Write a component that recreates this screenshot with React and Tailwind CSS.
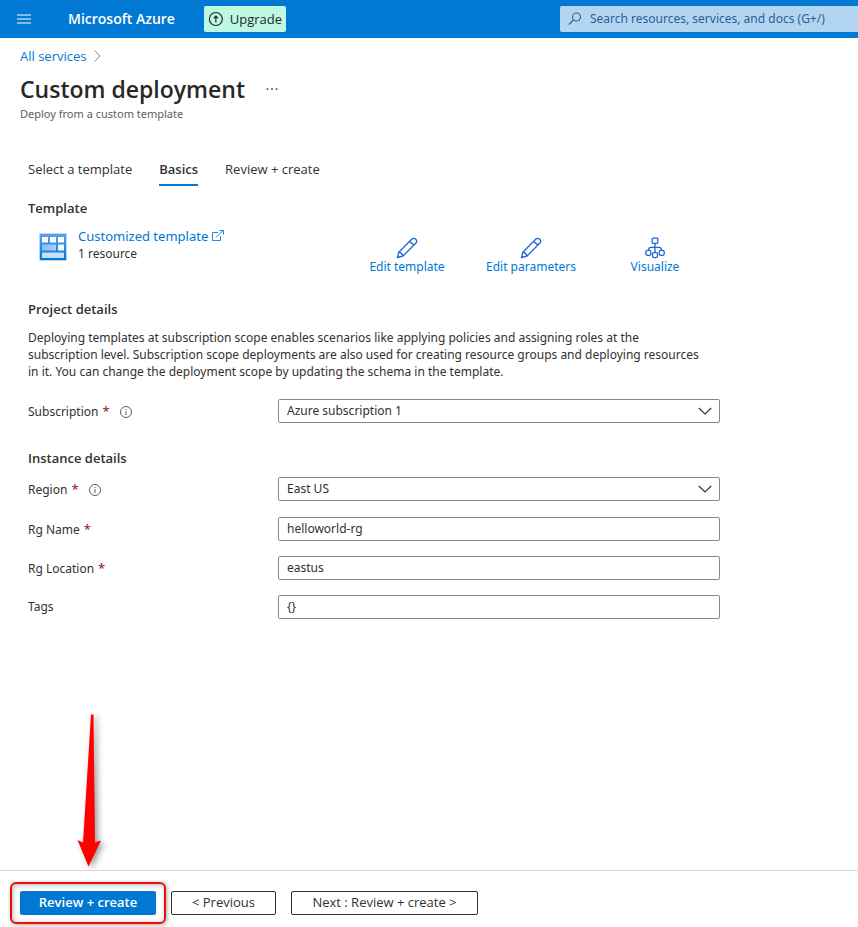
import { useState } from "react";

function MenuIcon() {
  return (
    <svg width="14" height="10" viewBox="0 0 14 10" fill="none" stroke="#7fbcec" strokeWidth="2" aria-hidden="true">
      <path d="M0 1h14M0 5h14M0 9h14" />
    </svg>
  );
}

function UpgradeIcon() {
  return (
    <svg width="16" height="16" viewBox="0 0 16 16" fill="none" stroke="#1b2b26" strokeWidth="1.2" aria-hidden="true">
      <circle cx="8" cy="8" r="6.600" />
      <path d="M8 11.500V5M5.800 7.200L8 5l2.200 2.200" />
    </svg>
  );
}

function SearchIcon() {
  return (
    <svg width="14" height="14" viewBox="0 0 14 14" fill="none" stroke="#2b639c" strokeWidth="1.1" aria-hidden="true">
      <circle cx="8.500" cy="5" r="4" />
      <path d="M5.500 8L.8 12.500" />
    </svg>
  );
}

function TemplateIcon() {
  return (
    <svg width="28" height="28" viewBox="0 0 28 28" className="shrink-0" aria-hidden="true">
      <defs>
        <linearGradient id="tile" x1="0" y1="0" x2="0" y2="1">
          <stop offset="0" stopColor="#5ea0ef" />
          <stop offset="1" stopColor="#0078d4" />
        </linearGradient>
        <linearGradient id="pane" x1="0" y1="0" x2="1" y2="0">
          <stop offset="0" stopColor="#86bdf2" />
          <stop offset="1" stopColor="#a9cff6" />
        </linearGradient>
      </defs>
      <rect width="28" height="28" rx="1" fill="#b9d8f8" />
      <rect x="1" y="1" width="26" height="26" fill="url(#tile)" />
      <path d="M3 4h6v5.500H3zM11 4h6v5.500h-6zM19 4h6v5.500h-6z" fill="#fff" />
      <path d="M3 11.500h14v6H3z" fill="url(#pane)" />
      <path d="M19 11.500h6v6h-6z" fill="#f2f8ff" />
      <path d="M3 19.500h22V25H3z" fill="#c3e1f9" />
    </svg>
  );
}

function ExternalIcon() {
  return (
    <svg width="12" height="12" viewBox="0 0 12 12" fill="none" stroke="#2b88d8" strokeWidth="1" aria-hidden="true">
      <path d="M6 2.500H.5v8h8V6M4 7.500L11 .5M7.500.5H11.500V4.500" />
    </svg>
  );
}

function PencilIcon() {
  return (
    <svg width="22" height="22" viewBox="0 0 22 22" fill="none" stroke="#1765d8" strokeWidth="1.300" strokeLinejoin="round" aria-hidden="true">
      <path d="M1.500 20.500l1.300-5.300L15.700 2.300a2.600 2.600 0 0 1 4 4L6.800 19.200zM2.800 15.200c2 .2 3.600 1.800 4 4M13.700 4.300l4 4" />
    </svg>
  );
}

function VisualizeIcon() {
  return (
    <svg width="20" height="22" viewBox="0 0 20 22" fill="none" stroke="#1765d8" strokeWidth="1.300" aria-hidden="true">
      <rect x="7.200" y="1.200" width="5.600" height="5.200" rx=".8" />
      <path d="M10 6.400v9.200M3.500 13.300c0-2 1-2.900 2.500-2.900h8c1.500 0 2.500.9 2.500 2.900" />
      <rect x=".8" y="13.300" width="5" height="5" rx="1.600" />
      <rect x="7.500" y="15.600" width="5" height="5" rx="1.600" />
      <rect x="14.200" y="13.300" width="5" height="5" rx="1.600" />
    </svg>
  );
}

function InfoIcon() {
  return (
    <svg width="12" height="12" viewBox="0 0 12 12" fill="none" stroke="#605e5c" strokeWidth="1" aria-hidden="true">
      <circle cx="6" cy="6" r="5.500" />
      <path d="M6 5v4M6 3v1" />
    </svg>
  );
}

function ArrowMark() {
  return (
    <svg
      width="46"
      height="170"
      viewBox="0 0 46 170"
      className="pointer-events-none absolute bottom-full left-1/2 mb-2 -translate-x-1/2 drop-shadow-[3px_2px_3px_rgba(0,0,0,0.4)]"
      aria-hidden="true"
    >
      <path d="M26 1.500h2.500L30 129.500l6-2L23.500 153.500 12.500 127l5.500 2.500z" fill="#f00" />
    </svg>
  );
}

function Row({ id, label, required, info, children }) {
  return (
    <div className="flex items-center">
      <div className="flex w-[250px] shrink-0 items-center">
        <label htmlFor={id}>
          {label}
          {required && <span className="ml-1 text-[13px] font-medium text-[#a4262c]">*</span>}
        </label>
        {info && (
          <button type="button" aria-label={"About " + label} className="ml-2.5 pt-px">
            <InfoIcon />
          </button>
        )}
      </div>
      {children}
    </div>
  );
}

const fieldClass = "h-6 w-full rounded-[2px] border border-[#8a8886] bg-white px-2 text-[#323130]";

function Dropdown({ id, value }) {
  return (
    <div className="relative min-w-0 flex-1">
      <select id={id} defaultValue={value} className={fieldClass + " block appearance-none leading-[20px]"}>
        <option>{value}</option>
      </select>
      <svg width="14" height="8" viewBox="0 0 14 8" fill="none" stroke="#323130" strokeWidth="1.100" className="pointer-events-none absolute top-2 right-2" aria-hidden="true">
        <path d="M.8 1L7 7 13.200 1" />
      </svg>
    </div>
  );
}

function TextBox({ id, value }) {
  const [text, setText] = useState(value);
  return (
    <div className="min-w-0 flex-1">
      <input id={id} type="text" value={text} onChange={(e) => setText(e.target.value)} className={fieldClass + " block pb-0.5"} />
    </div>
  );
}

function Action({ label, children }) {
  return (
    <button type="button" className="flex w-[124px] flex-col items-center text-[12px] leading-4 text-[#0078d4]">
      {children}
      {label}
    </button>
  );
}

export default function App() {
  return (
    <div className="flex min-h-screen flex-col bg-white font-['Open_Sans','Segoe_UI',sans-serif] text-[13px] leading-[18px] text-[#323130]">
      <header className="flex h-[38px] items-center bg-[#0078d4] pl-[17px]">
        <button type="button" aria-label="Show portal menu">
          <MenuIcon />
        </button>
        <a href="#home" className="ml-[37px] w-[108px] text-[14px] font-semibold whitespace-nowrap text-white">Microsoft Azure</a>
        <button type="button" className="ml-7 flex h-[26px] w-[82px] items-center gap-1.5 rounded-[2px] bg-[#bef7e3] px-1 font-medium text-[#1b2b26]">
          <UpgradeIcon />
          Upgrade
        </button>
        <label className="ml-auto flex h-[26px] w-[298px] items-center gap-2 rounded-l-[2px] bg-[#b2d6f2] pl-2">
          <SearchIcon />
          <input
            type="search"
            aria-label="Search"
            placeholder="Search resources, services, and docs (G+/)"
            className="min-w-0 flex-1 bg-transparent font-['Noto_Sans',sans-serif] text-[12px] outline-none placeholder:text-[#2b5f93]"
          />
        </label>
      </header>

      <main className="flex-1 px-5 pt-[9px]">
        <nav aria-label="Breadcrumb" className="flex items-center gap-2">
          <a href="#services" className="text-[#0078d4]">All services</a>
          <svg width="7" height="12" viewBox="0 0 7 12" fill="none" stroke="#8a8886" aria-hidden="true">
            <path d="M.5.5L6 6 .5 11.500" />
          </svg>
        </nav>
        <div className="mt-2 flex items-center gap-5">
          <h1 className="text-[23px] leading-8 font-semibold text-[#292827]">Custom deployment</h1>
          <button type="button" aria-label="More actions">
            <svg width="14" height="4" viewBox="0 0 14 4" fill="#605e5c" aria-hidden="true">
              <circle cx="2.500" cy="2" r="1" />
              <circle cx="7" cy="2" r="1" />
              <circle cx="11.500" cy="2" r="1" />
            </svg>
          </button>
        </div>
        <p className="mt-px font-['Noto_Sans',sans-serif] text-[11px] leading-4 text-[#605e5c]">Deploy from a custom template</p>

        <div className="max-w-[700px] pt-[35px] pl-2">
          <div role="tablist" className="flex gap-[27px] leading-6">
            <button type="button" role="tab" aria-selected="false" className="pb-[5px]">Select a template</button>
            <button type="button" role="tab" aria-selected="true" className="border-b-2 border-[#0078d4] pb-[3px] font-semibold">Basics</button>
            <button type="button" role="tab" aria-selected="false" className="pb-[5px]">Review + create</button>
          </div>

          <h2 className="mt-[13px] font-semibold">Template</h2>
          <div className="mt-2.5 flex h-[49px] justify-between">
            <div className="flex gap-[11px] pl-[11px]">
              <div className="pt-1.5">
                <TemplateIcon />
              </div>
              <div>
                <a href="#template" className="flex items-center gap-1 font-['Noto_Sans',sans-serif] text-[#0078d4]">
                  Customized template
                  <ExternalIcon />
                </a>
                <p className="font-['Noto_Sans',sans-serif] text-[12px]">1 resource</p>
              </div>
            </div>
            <div className="flex items-center pt-2 pr-[3px] font-['Noto_Sans',sans-serif]">
              <Action label="Edit template"><PencilIcon /></Action>
              <Action label="Edit parameters"><PencilIcon /></Action>
              <Action label="Visualize"><VisualizeIcon /></Action>
            </div>
          </div>

          <h2 className="mt-6 font-semibold">Project details</h2>
          <p className="mt-[11px] max-w-[680px] font-['Noto_Sans',sans-serif] text-[12px] leading-[17px]">
            Deploying templates at subscription scope enables scenarios like applying policies and assigning roles at the
            subscription level. Subscription scope deployments are also used for creating resource groups and deploying
            resources in it. You can change the deployment scope by updating the schema in the template.
          </p>
          <div className="mt-[19px] font-['Noto_Sans',sans-serif] text-[12px]">
            <Row id="subscription" label="Subscription" required info>
              <Dropdown id="subscription" value="Azure subscription 1" />
            </Row>
          </div>

          <h2 className="mt-[26px] font-semibold">Instance details</h2>
          <div className="mt-2.5 font-['Noto_Sans',sans-serif] text-[12px]">
            <Row id="region" label="Region" required info>
              <Dropdown id="region" value="East US" />
            </Row>
          </div>
          <div className="mt-4 flex flex-col gap-[15px] font-['Noto_Sans',sans-serif] text-[12px]">
            <Row id="rg-name" label="Rg Name" required>
              <TextBox id="rg-name" value="helloworld-rg" />
            </Row>
            <Row id="rg-location" label="Rg Location" required>
              <TextBox id="rg-location" value="eastus" />
            </Row>
            <Row id="tags" label="Tags">
              <TextBox id="tags" value="{}" />
            </Row>
          </div>
        </div>
      </main>

      <footer className="flex items-center gap-[15px] border-t border-[#dddbda] px-5 pt-5 pb-3">
        <div className="relative">
          <ArrowMark />
          <div className="pointer-events-none absolute -inset-x-2.5 -inset-y-[9px] rounded-md border-2 border-[#f00a0a] shadow-[1px_1px_4px_rgba(0,0,0,0.35),inset_1px_1px_5px_rgba(0,0,0,0.3)]" />
          <button type="button" className="h-6 w-[136px] rounded-[2px] bg-[#0078d4] pb-0.5 font-semibold text-white">Review + create</button>
        </div>
        <button type="button" className="h-6 w-[105px] rounded-[2px] border border-[#323130] pb-0.5">&lt; Previous</button>
        <button type="button" className="h-6 w-[187px] rounded-[2px] border border-[#323130] pb-0.5">Next : Review + create &gt;</button>
      </footer>
    </div>
  );
}
